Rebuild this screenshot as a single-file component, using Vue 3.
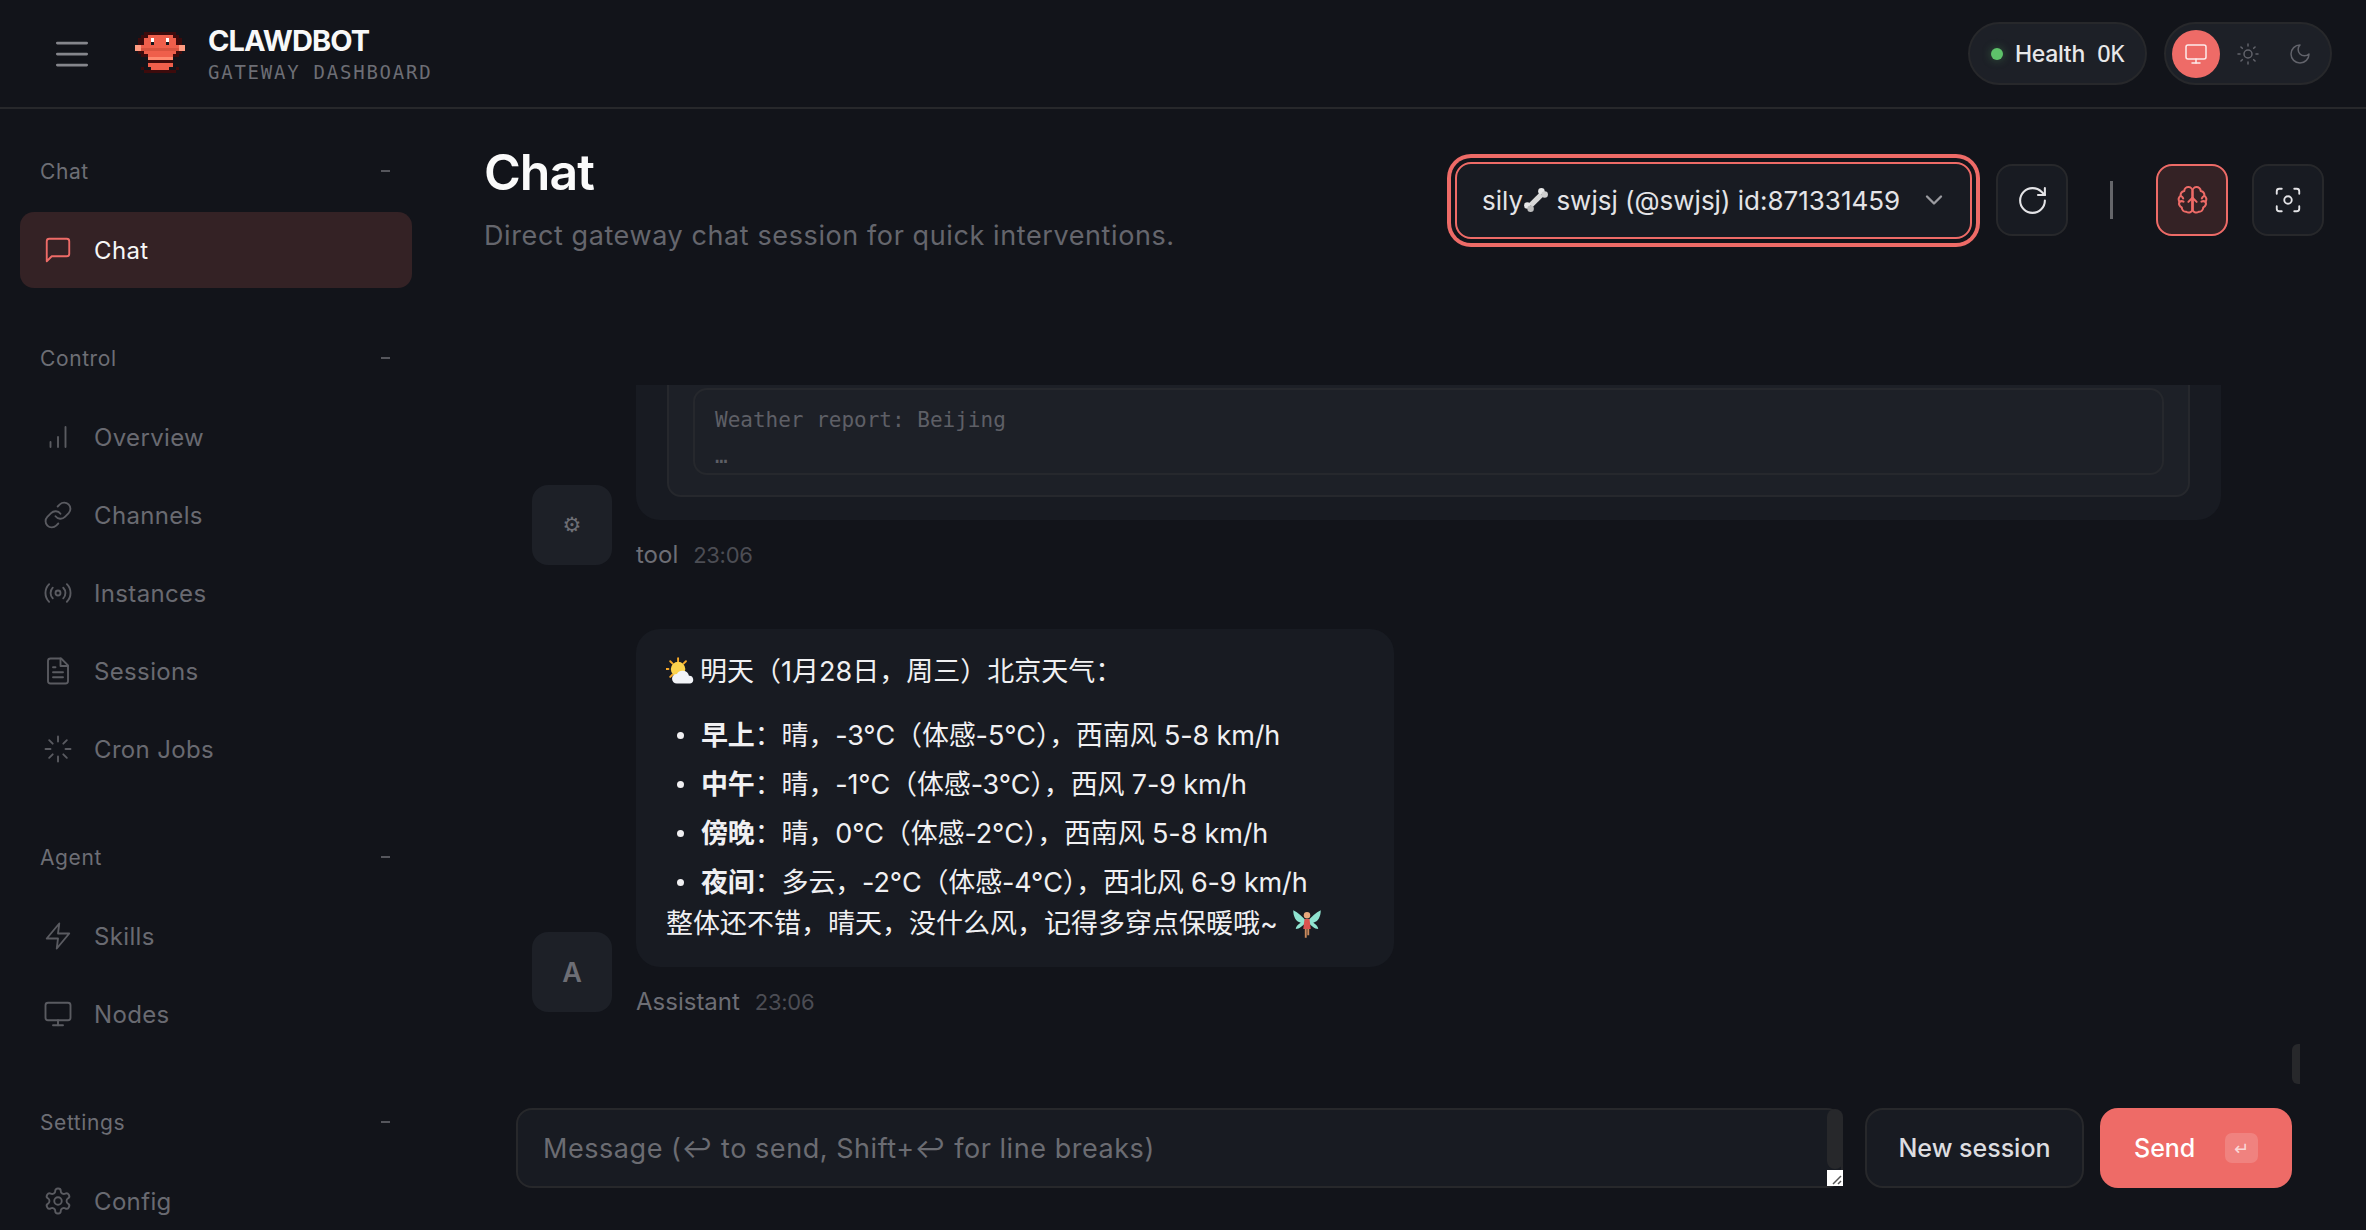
<script setup>
const icons = {
  menu: ['M4 6h16', 'M4 12h16', 'M4 18h16'],
  chat: ['M21 15a2 2 0 0 1-2 2H7l-4 4V5a2 2 0 0 1 2-2h14a2 2 0 0 1 2 2z'],
  overview: ['M6 20v-4', 'M12 20v-8', 'M18 20V4'],
  channels: [
    'M10 13a5 5 0 0 0 7.54.54l3-3a5 5 0 0 0-7.07-7.07l-1.72 1.71',
    'M14 11a5 5 0 0 0-7.54-.54l-3 3a5 5 0 0 0 7.07 7.07l1.71-1.71',
  ],
  instances: [
    'M4.9 19.1C1 15.2 1 8.8 4.9 4.9',
    'M7.8 16.2c-2.3-2.3-2.3-6.1 0-8.5',
    'M10 12a2 2 0 1 0 4 0a2 2 0 1 0-4 0',
    'M16.2 7.8c2.3 2.3 2.3 6.1 0 8.5',
    'M19.1 4.9C23 8.8 23 15.1 19.1 19',
  ],
  sessions: [
    'M14.5 2H6a2 2 0 0 0-2 2v16a2 2 0 0 0 2 2h12a2 2 0 0 0 2-2V7.5L14.5 2z',
    'M14 2v6h6',
    'M16 13H8',
    'M16 17H8',
    'M10 9H8',
  ],
  cron: [
    'M12 2v4', 'M12 18v4', 'M4.93 4.93l2.83 2.83', 'M16.24 16.24l2.83 2.83',
    'M2 12h4', 'M18 12h4', 'M4.93 19.07l2.83-2.83', 'M16.24 7.76l2.83-2.83',
  ],
  skills: ['M13 2 3 14h9l-1 8 10-12h-9l1-8z'],
  nodes: ['M4 3h16a2 2 0 0 1 2 2v10a2 2 0 0 1-2 2H4a2 2 0 0 1-2-2V5a2 2 0 0 1 2-2z', 'M8 21h8', 'M12 17v4'],
  config: [
    'M12.22 2h-.44a2 2 0 0 0-2 2v.18a2 2 0 0 1-1 1.73l-.43.25a2 2 0 0 1-2 0l-.15-.08a2 2 0 0 0-2.73.73l-.22.38a2 2 0 0 0 .73 2.73l.15.1a2 2 0 0 1 1 1.72v.51a2 2 0 0 1-1 1.74l-.15.09a2 2 0 0 0-.73 2.73l.22.38a2 2 0 0 0 2.73.73l.15-.08a2 2 0 0 1 2 0l.43.25a2 2 0 0 1 1 1.73V20a2 2 0 0 0 2 2h.44a2 2 0 0 0 2-2v-.18a2 2 0 0 1 1-1.73l.43-.25a2 2 0 0 1 2 0l.15.08a2 2 0 0 0 2.73-.73l.22-.39a2 2 0 0 0-.73-2.73l-.15-.08a2 2 0 0 1-1-1.74v-.5a2 2 0 0 1 1-1.74l.15-.09a2 2 0 0 0 .73-2.73l-.22-.38a2 2 0 0 0-2.73-.73l-.15.08a2 2 0 0 1-2 0l-.43-.25a2 2 0 0 1-1-1.73V4a2 2 0 0 0-2-2z',
    'M9 12a3 3 0 1 0 6 0a3 3 0 1 0-6 0',
  ],
  sun: [
    'M8 12a4 4 0 1 0 8 0a4 4 0 1 0-8 0',
    'M12 2v2', 'M12 20v2', 'M4.93 4.93l1.41 1.41', 'M17.66 17.66l1.41 1.41',
    'M2 12h2', 'M20 12h2', 'M6.34 17.66l-1.41 1.41', 'M19.07 4.93l-1.41 1.41',
  ],
  moon: ['M12 3a6 6 0 0 0 9 9 9 9 0 1 1-9-9Z'],
  chevron: ['m6 9 6 6 6-6'],
  refresh: ['M21 12a9 9 0 1 1-9-9c2.52 0 4.93 1 6.74 2.74L21 8', 'M21 3v5h-5'],
  brain: [
    'M12 5.5a3 3 0 0 0-6-.5 3 3 0 0 0-2.600 3.600 3 3 0 0 0-.900 4.400 3 3 0 0 0 1.700 4 3 3 0 0 0 3.300 3.200A3 3 0 0 0 12 19z',
    'M12 5.5a3 3 0 0 1 6-.5 3 3 0 0 1 2.600 3.600 3 3 0 0 1 .900 4.400 3 3 0 0 1-1.700 4 3 3 0 0 1-3.300 3.200A3 3 0 0 1 12 19z',
    'M3.400 8.600c.9.4 1.500 1 1.800 1.900',
    'M20.600 8.600c-.9.4-1.500 1-1.800 1.900',
    'M2.500 13c1-.7 2-.7 3-.2',
    'M21.500 13c-1-.7-2-.7-3-.2',
    'M12 19v-9',
    'M9 13l3-3 3 3',
  ],
  focus: [
    'M3 7V5a2 2 0 0 1 2-2h2',
    'M17 3h2a2 2 0 0 1 2 2v2',
    'M21 17v2a2 2 0 0 1-2 2h-2',
    'M7 21H5a2 2 0 0 1-2-2v-2',
    'M9 12a3 3 0 1 0 6 0a3 3 0 1 0-6 0',
  ],
}

const navGroups = [
  { label: 'Chat', items: [{ label: 'Chat', icon: 'chat', active: true }] },
  {
    label: 'Control',
    items: [
      { label: 'Overview', icon: 'overview' },
      { label: 'Channels', icon: 'channels' },
      { label: 'Instances', icon: 'instances' },
      { label: 'Sessions', icon: 'sessions' },
      { label: 'Cron Jobs', icon: 'cron' },
    ],
  },
  {
    label: 'Agent',
    items: [
      { label: 'Skills', icon: 'skills' },
      { label: 'Nodes', icon: 'nodes' },
    ],
  },
  { label: 'Settings', items: [{ label: 'Config', icon: 'config' }] },
]

const forecast = [
  { when: '早上', text: '：晴，-3°C（体感-5°C），西南风 5-8 km/h' },
  { when: '中午', text: '：晴，-1°C（体感-3°C），西风 7-9 km/h' },
  { when: '傍晚', text: '：晴，0°C（体感-2°C），西南风 5-8 km/h' },
  { when: '夜间', text: '：多云，-2°C（体感-4°C），西北风 6-9 km/h' },
]

// pixel mascot, [x, y, w, h, colour] on a 16 cell grid
const D = '#3d0b0c'
const O = '#ef5f4b'
const L = '#ff9c82'
const logo = [
  [3, 0, 10, 1, D],
  [2, 1, 2, 1, D], [12, 1, 2, 1, D],
  [4, 1, 8, 1, O],
  [1, 2, 2, 1, D], [13, 2, 2, 1, D],
  [3, 2, 10, 1, O],
  [3, 3, 10, 1, O],
  [1, 3, 2, 1, D], [13, 3, 2, 1, D],
  [0, 4, 2, 2, L], [14, 4, 2, 2, L],
  [2, 4, 12, 2, O],
  [2, 5, 12, 1, '#d9533f'],
  [3, 6, 10, 1, O],
  [1, 6, 2, 1, D], [13, 6, 2, 1, D],
  [4, 7, 8, 1, O],
  [2, 7, 2, 1, D], [12, 7, 2, 1, D],
  [4, 8, 8, 1, '#ff8a70'],
  [4, 9, 8, 1, D],
  [4, 10, 8, 1, O],
  [2, 11, 1, 1, D], [13, 11, 1, 1, D],
  [5, 11, 6, 1, O],
  [3, 12, 1, 1, D], [12, 12, 1, 1, D],
  [4, 12, 8, 1, D],
  [5, 2, 1, 1, '#ffffff'], [10, 2, 1, 1, '#ffffff'],
  [5, 3, 1, 1, '#14161b'], [10, 3, 1, 1, '#14161b'],
]
</script>

<template>
  <div class="app">
    <header class="topbar">
      <div class="brand-area">
        <svg class="ic burger" viewBox="0 0 24 24"><path v-for="d in icons.menu" :key="d" :d="d" /></svg>
        <svg class="logo" viewBox="0 0 16 14" shape-rendering="crispEdges">
          <rect v-for="(r, i) in logo" :key="i" :x="r[0]" :y="r[1]" :width="r[2]" :height="r[3]" :fill="r[4]" />
        </svg>
        <div class="brand-text">
          <div class="brand-name">CLAWDBOT</div>
          <div class="brand-sub">GATEWAY DASHBOARD</div>
        </div>
      </div>
      <div class="top-right">
        <div class="pill health">
          <span class="dot"></span>
          <span class="health-label">Health</span>
          <span class="health-value">OK</span>
        </div>
        <div class="pill theme">
          <span class="theme-btn on">
            <svg class="ic" viewBox="0 0 24 24"><path v-for="d in icons.nodes" :key="d" :d="d" /></svg>
          </span>
          <span class="theme-btn">
            <svg class="ic" viewBox="0 0 24 24"><path v-for="d in icons.sun" :key="d" :d="d" /></svg>
          </span>
          <span class="theme-btn">
            <svg class="ic" viewBox="0 0 24 24"><path v-for="d in icons.moon" :key="d" :d="d" /></svg>
          </span>
        </div>
      </div>
    </header>

    <div class="shell">
      <aside class="sidebar">
        <section v-for="group in navGroups" :key="group.label" class="nav-group">
          <div class="nav-label">
            <span>{{ group.label }}</span>
            <span class="nav-dash"></span>
          </div>
          <div class="nav-items">
            <a v-for="item in group.items" :key="item.label" class="nav-item" :class="{ active: item.active }">
              <svg class="ic nav-ic" viewBox="0 0 24 24"><path v-for="d in icons[item.icon]" :key="d" :d="d" /></svg>
              <span>{{ item.label }}</span>
            </a>
          </div>
        </section>
      </aside>

      <main class="main">
        <div class="page-head">
          <div class="page-title">
            <h1>Chat</h1>
            <p class="page-sub">Direct gateway chat session for quick interventions.</p>
          </div>
          <div class="actions">
            <div class="session-select">
              <span class="session-text">sily<svg class="emoji bone" viewBox="0 0 24 24">
                <path d="M7 17 17 7" stroke="#d8d8d8" stroke-width="5" />
                <circle cx="17" cy="4" r="3" fill="#e8e8e8" /><circle cx="20" cy="7" r="3" fill="#cfcfcf" />
                <circle cx="4" cy="17" r="3" fill="#e8e8e8" /><circle cx="7" cy="20" r="3" fill="#bdbdbd" />
              </svg> swjsj (@swjsj) id:871331459</span>
              <svg class="ic chev" viewBox="0 0 24 24"><path v-for="d in icons.chevron" :key="d" :d="d" /></svg>
            </div>
            <button class="icon-btn refresh">
              <svg class="ic" viewBox="0 0 24 24"><path v-for="d in icons.refresh" :key="d" :d="d" /></svg>
            </button>
            <span class="divider"></span>
            <button class="icon-btn brain">
              <svg class="ic" viewBox="0 0 24 24"><path v-for="d in icons.brain" :key="d" :d="d" /></svg>
            </button>
            <button class="icon-btn focus">
              <svg class="ic" viewBox="0 0 24 24"><path v-for="d in icons.focus" :key="d" :d="d" /></svg>
            </button>
          </div>
        </div>

        <div class="thread">
          <div class="group first">
            <div class="avatar gear">⚙</div>
            <div class="group-body wide">
              <div class="bubble tool-bubble">
                <div class="tool-card">
                  <pre class="tool-output">Weather report: Beijing

…</pre>
                </div>
              </div>
              <div class="meta"><span>tool</span><span class="time">23:06</span></div>
            </div>
          </div>

          <div class="group">
            <div class="avatar">A</div>
            <div class="group-body">
              <div class="bubble reply">
                <p class="intro"><svg class="emoji sun" viewBox="0 0 24 24">
                  <g stroke="#f7a928" stroke-width="1.6" stroke-linecap="round">
                    <path d="M10 1v3M2 10H0M3.5 3.5l2 2M16.5 3.5l-2 2M3.5 16.500l2-2" />
                  </g>
                  <circle cx="10" cy="10" r="6" fill="#fcd34d" />
                  <path d="M9 22a4 4 0 0 1 0-8 5.500 5.500 0 0 1 10 1.500 3.300 3.300 0 0 1 1 6.500z" fill="#f2f4f8" />
                </svg>明天（1月28日，周三）北京天气：</p>
                <ul>
                  <li v-for="row in forecast" :key="row.when"><strong>{{ row.when }}</strong>{{ row.text }}</li>
                </ul>
                <p class="outro">整体还不错，晴天，没什么风，记得多穿点保暖哦~ <svg class="emoji fairy" viewBox="0 0 24 24">
                  <path d="M11 9C8 6 5 3 1 1c0 5 2 9 6 10-2 1-4 3-4 5 3 0 6-3 8-5z" fill="#8fe3d0" />
                  <path d="M13 9c3-3 6-6 10-8 0 5-2 9-6 10 2 1 4 3 4 5-3 0-6-3-8-5z" fill="#8fe3d0" />
                  <circle cx="12" cy="5" r="2.600" fill="#e8a87c" />
                  <path d="M10 8h4l1 8h-6z" fill="#d9534f" />
                  <path d="M11 16v7M13 16v5" stroke="#c98a5c" stroke-width="1.500" />
                </svg></p>
              </div>
              <div class="meta"><span>Assistant</span><span class="time">23:06</span></div>
            </div>
          </div>
          <span class="thumb"></span>
        </div>

        <div class="compose">
          <div class="input-box">
            <span class="placeholder">Message (↩ to send, Shift+↩ for line breaks)</span>
            <span class="input-scroll"></span>
            <span class="resizer">
              <svg viewBox="0 0 16 16"><path d="M6 14 14 6M11 14l3-3" stroke="#555" stroke-width="1.500" /></svg>
            </span>
          </div>
          <button class="btn new-session">New session</button>
          <button class="btn send">
            <span>Send</span>
            <kbd>↵</kbd>
          </button>
        </div>
      </main>
    </div>
  </div>
</template>

<style>
html,
body {
  margin: 0;
  height: 100%;
  background: #12141a;
  overflow: hidden;
}
</style>

<style scoped>
.app {
  width: 2366px;
  height: 1230px;
  display: flex;
  flex-direction: column;
  overflow: hidden;
  background: #12141a;
  color: #f4f4f5;
  font-family: Inter, "Noto Sans CJK SC", sans-serif;
}

.ic {
  fill: none;
  stroke: currentColor;
  stroke-width: 1.5;
  stroke-linecap: round;
  stroke-linejoin: round;
  flex-shrink: 0;
}

/* top bar */
.topbar {
  height: 107px;
  box-sizing: content-box;
  flex-shrink: 0;
  display: flex;
  align-items: center;
  justify-content: space-between;
  padding: 0 34px 0 50px;
  border-bottom: 2px solid #27282b;
}

.brand-area {
  display: flex;
  align-items: center;
}

.burger {
  width: 44px;
  height: 44px;
  color: #85868c;
  margin-right: 41px;
}

.logo {
  width: 50px;
  height: 44px;
  margin-right: 23px;
}

.brand-name {
  font-size: 29px;
  font-weight: 700;
  letter-spacing: -0.9px;
  line-height: 34px;
  color: #f8f8f8;
}

.brand-sub {
  font-family: "DejaVu Sans Mono", monospace;
  font-size: 19px;
  letter-spacing: 1.76px;
  line-height: 24px;
  color: #6d6e75;
  margin-top: 2px;
}

.top-right {
  display: flex;
  gap: 17px;
}

.pill {
  height: 63px;
  box-sizing: border-box;
  display: flex;
  align-items: center;
  border-radius: 32px;
  border: 2px solid #27282b;
  background: #1d2027;
}

.health {
  width: 179px;
  padding-left: 21px;
  font-size: 23px;
}

.dot {
  width: 12px;
  height: 12px;
  border-radius: 50%;
  background: #5ec26a;
  box-shadow: 0 0 10px rgba(94, 194, 106, 0.35);
  margin-right: 12px;
}

.health-label {
  color: #e8e8ea;
  font-weight: 500;
  letter-spacing: -0.3px;
}

.health-value {
  font-family: "DejaVu Sans Mono", monospace;
  margin-left: 12px;
  color: #e8e8ea;
}

.theme {
  width: 168px;
  padding-left: 6px;
  gap: 4px;
}

.theme-btn {
  width: 48px;
  height: 48px;
  display: flex;
  align-items: center;
  justify-content: center;
  border-radius: 50%;
  color: #62636b;
}

.theme-btn .ic {
  width: 24px;
  height: 24px;
}

.theme-btn.on {
  background: #ee6b67;
  color: #fdeceb;
}

/* sidebar */
.shell {
  flex: 1;
  display: flex;
  min-height: 0;
}

.sidebar {
  width: 440px;
  flex-shrink: 0;
  box-sizing: border-box;
  padding: 47px 28px 0 20px;
  overflow: hidden;
}

.nav-group {
  margin-bottom: 55px;
}

.nav-label {
  height: 30px;
  display: flex;
  align-items: center;
  justify-content: space-between;
  padding: 0 22px 0 20px;
  font-size: 21px;
  letter-spacing: 0.6px;
  color: #6d6e75;
  margin-bottom: 26px;
}

.nav-dash {
  width: 9px;
  height: 2px;
  background: #55565c;
}

.nav-items {
  display: flex;
  flex-direction: column;
  gap: 2px;
}

.nav-item {
  height: 76px;
  display: flex;
  align-items: center;
  gap: 21px;
  padding-left: 22px;
  border-radius: 14px;
  font-size: 24px;
  color: #696a71;
  letter-spacing: 0.35px;
}

.nav-item.active {
  background: #342225;
  color: #f6f6f6;
}

.nav-item.active .nav-ic {
  color: #ee6b67;
}

.nav-ic {
  width: 30px;
  height: 30px;
  margin-left: 1px;
  color: #5a5b61;
}

/* main column */
.main {
  flex: 1;
  min-width: 0;
  display: flex;
  flex-direction: column;
  padding: 35px 42px 42px 44px;
}

.page-head {
  height: 112px;
  flex-shrink: 0;
  display: flex;
  align-items: center;
  justify-content: space-between;
}

.page-title {
  align-self: flex-start;
}

h1 {
  margin: 0;
  font-size: 50px;
  line-height: 56px;
  font-weight: 600;
  letter-spacing: -1px;
  color: #fafafa;
}

.page-sub {
  margin: 18px 0 0;
  font-size: 27px;
  letter-spacing: 0.6px;
  line-height: 36px;
  color: #65666d;
}

.actions {
  display: flex;
  align-items: center;
  gap: 24px;
}

.session-select {
  width: 517px;
  height: 77px;
  box-sizing: border-box;
  display: flex;
  align-items: center;
  justify-content: space-between;
  padding: 0 22px 0 25px;
  border: 2px solid #ee6b67;
  border-radius: 16px;
  background: #181b22;
  box-shadow: 0 0 0 4px #12141a, 0 0 0 8px #ee6b67;
  font-size: 26px;
  color: #e4e4e7;
  white-space: nowrap;
}

.session-text {
  display: flex;
  align-items: center;
  white-space: pre;
}

.chev {
  width: 28px;
  height: 28px;
  color: #9a9ba0;
  stroke-width: 2;
}

.emoji {
  flex-shrink: 0;
}

.bone {
  width: 26px;
  height: 26px;
}

.icon-btn {
  width: 72px;
  height: 72px;
  padding: 0;
  display: flex;
  align-items: center;
  justify-content: center;
  box-sizing: border-box;
  border-radius: 16px;
  border: 2px solid #27282b;
  background: #181b22;
  color: #e4e4e7;
}

.icon-btn .ic {
  width: 30px;
  height: 30px;
}

.refresh .ic {
  width: 33px;
  height: 33px;
}

.divider {
  width: 3px;
  height: 38px;
  background: #65666a;
  margin: 0 19px 0 18px;
}

.brain {
  background: #342225;
  border-color: #ee6b67;
  color: #ee6b67;
}

.icon-btn.brain .ic {
  width: 33px;
  height: 33px;
}

/* thread */
.thread {
  position: relative;
  flex: 1;
  min-height: 0;
  margin: 129px 24px 0 48px;
  padding: 0 79px 96px 0;
  display: flex;
  flex-direction: column;
  justify-content: flex-end;
  gap: 64px;
  overflow: hidden;
}

.group {
  flex-shrink: 0;
  display: flex;
  align-items: flex-end;
  gap: 24px;
}

.avatar {
  width: 80px;
  height: 80px;
  flex-shrink: 0;
  display: flex;
  align-items: center;
  justify-content: center;
  border-radius: 16px;
  background: #1d2027;
  color: #6d6e75;
  font-size: 27px;
  font-weight: 600;
}

.gear {
  font-family: "DejaVu Sans", sans-serif;
  font-size: 21px;
  font-weight: 400;
}

.group-body {
  min-width: 0;
}

.group-body.wide {
  flex: 1;
}

.bubble {
  background: #181b22;
  border-radius: 24px;
}

.tool-bubble {
  padding: 30px 31px 23px 31px;
}

.tool-card {
  padding: 22px 24px 20px 24px;
  border: 2px solid #26282d;
  border-radius: 14px;
  background: #1d2027;
}

.tool-output {
  margin: 0;
  padding: 21px 20px 0;
  height: 87px;
  box-sizing: border-box;
  border: 2px solid #26282d;
  border-radius: 14px;
  background: #1d2027;
  font-family: "DejaVu Sans Mono", monospace;
  font-size: 21px;
  line-height: 18px;
  color: #5e5f66;
}

.reply {
  width: 758px;
  box-sizing: border-box;
  padding: 21px 30px 23px;
  font-size: 27px;
  color: #f0f0f2;
}

.reply p {
  margin: 0;
  display: flex;
  align-items: center;
  white-space: pre;
}

.intro {
  line-height: 43px;
}

.sun {
  width: 29px;
  height: 29px;
  margin-right: 5px;
}

.reply ul {
  margin: 21px 0 0;
  padding: 0 0 0 35px;
  list-style: none;
}

.reply li {
  position: relative;
  line-height: 43px;
  margin-top: 6px;
  letter-spacing: -0.15px;
}

.reply li:first-child {
  margin-top: 0;
}

.reply li::before {
  content: "";
  position: absolute;
  left: -24px;
  top: 18px;
  width: 7px;
  height: 7px;
  border-radius: 50%;
  background: #f0f0f2;
}

.reply strong {
  font-weight: 700;
}

.outro {
  line-height: 40px;
}

.fairy {
  width: 30px;
  height: 32px;
  margin-left: 7px;
}

.meta {
  display: flex;
  align-items: center;
  gap: 15px;
  height: 26px;
  padding-top: 22px;
  margin-bottom: -3px;
  font-size: 24px;
  line-height: 26px;
  color: #6d6e75;
}

.time {
  color: #4c4d54;
  font-size: 22px;
  letter-spacing: -0.3px;
}

.thumb {
  position: absolute;
  right: 0;
  bottom: 24px;
  width: 8px;
  height: 40px;
  border-radius: 6px 0 0 6px;
  background: #27282b;
}

/* composer */
.compose {
  flex-shrink: 0;
  display: flex;
  align-items: stretch;
  height: 80px;
  margin: 0 32px;
  gap: 16px;
}

.input-box {
  position: relative;
  width: 1327px;
  box-sizing: border-box;
  display: flex;
  align-items: center;
  padding-left: 25px;
  border: 2px solid #27282b;
  border-radius: 16px;
  background: #181b22;
  margin-right: 6px;
  font-size: 27px;
  letter-spacing: 0.55px;
  color: #6b6c72;
  white-space: nowrap;
}

.input-scroll {
  position: absolute;
  top: -1px;
  right: -2px;
  width: 16px;
  height: 60px;
  border-radius: 8px;
  background: #27282b;
}

.resizer {
  position: absolute;
  right: -2px;
  bottom: 0;
  width: 16px;
  height: 16px;
  background: #fff;
}

.resizer svg {
  display: block;
}

.btn {
  height: 80px;
  box-sizing: border-box;
  border-radius: 18px;
  font-family: inherit;
  font-size: 25px;
  font-weight: 500;
}

.new-session {
  width: 219px;
  border: 2px solid #27282b;
  background: #181b22;
  color: #dddde0;
}

.send {
  width: 192px;
  display: flex;
  align-items: center;
  justify-content: space-between;
  padding: 0 34px;
  border: none;
  background: #ee6b67;
  color: #fff;
}

kbd {
  width: 33px;
  height: 30px;
  display: flex;
  align-items: center;
  justify-content: center;
  border-radius: 7px;
  background: rgba(255, 255, 255, 0.16);
  color: rgba(255, 255, 255, 0.7);
  font-family: "DejaVu Sans", sans-serif;
  font-size: 18px;
}
</style>
